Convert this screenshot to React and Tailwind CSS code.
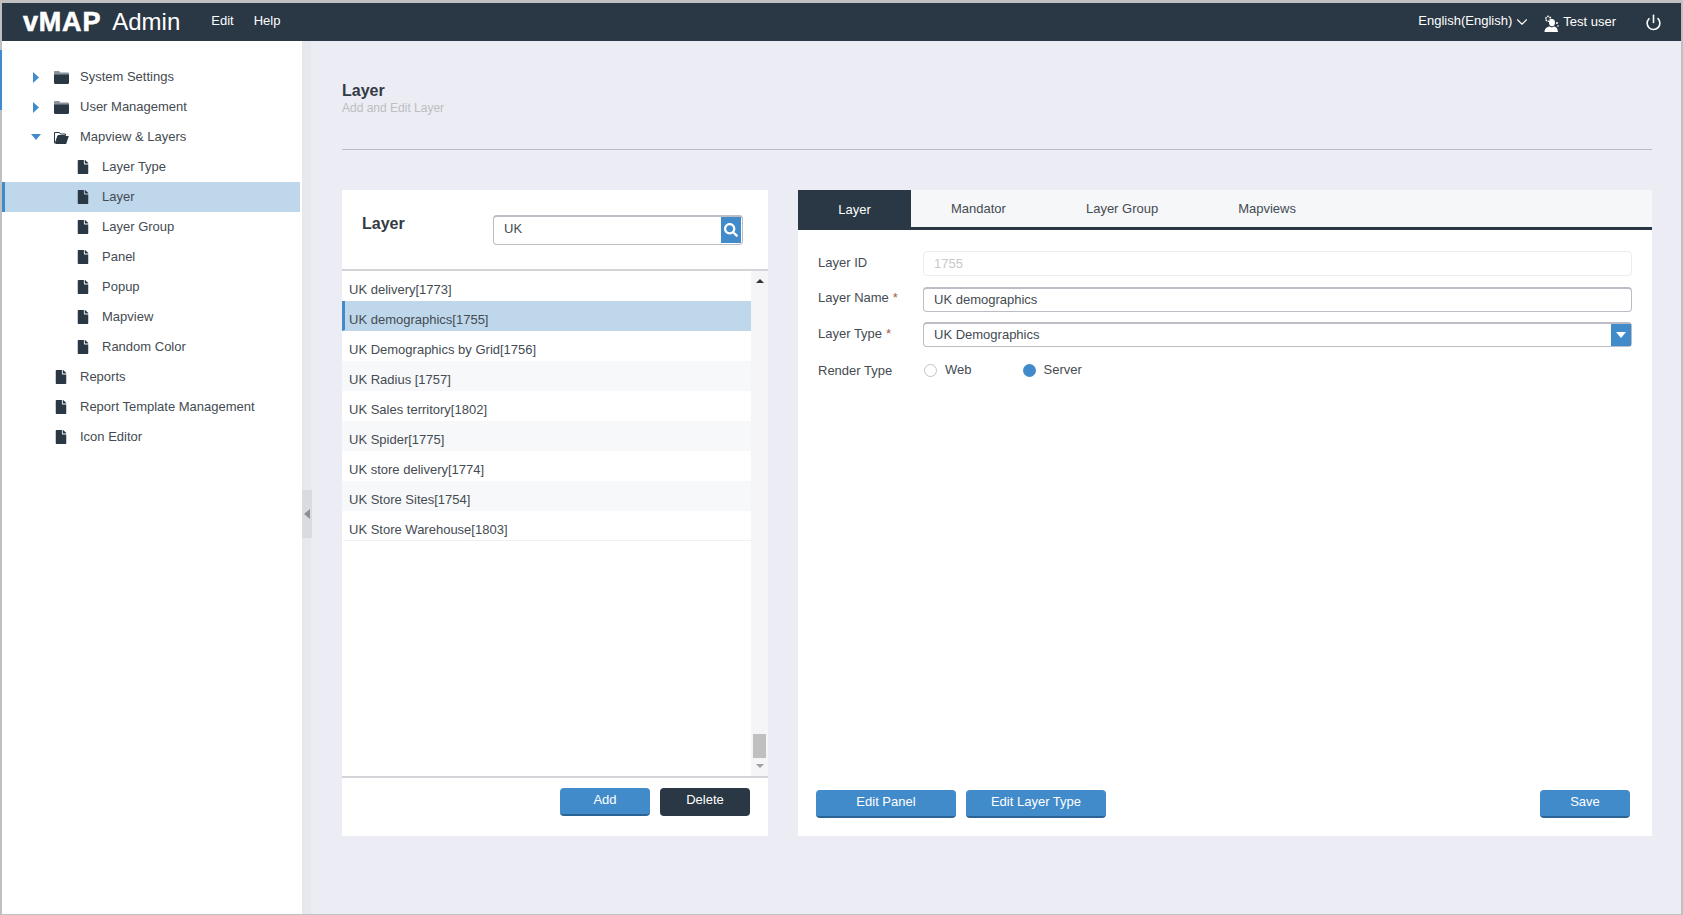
import { ChevronDown, Power } from "lucide-react";
import { FaFile, FaSearch } from "react-icons/fa";

const treeItems = [
	{ label: "System Settings", type: "closed" },
	{ label: "User Management", type: "closed" },
	{ label: "Mapview & Layers", type: "open" },
	{ label: "Layer Type", type: "child" },
	{ label: "Layer", type: "child", active: true },
	{ label: "Layer Group", type: "child" },
	{ label: "Panel", type: "child" },
	{ label: "Popup", type: "child" },
	{ label: "Mapview", type: "child" },
	{ label: "Random Color", type: "child" },
	{ label: "Reports", type: "file" },
	{ label: "Report Template Management", type: "file" },
	{ label: "Icon Editor", type: "file" },
];

const layers = [
	"UK delivery[1773]",
	"UK demographics[1755]",
	"UK Demographics by Grid[1756]",
	"UK Radius [1757]",
	"UK Sales territory[1802]",
	"UK Spider[1775]",
	"UK store delivery[1774]",
	"UK Store Sites[1754]",
	"UK Store Warehouse[1803]",
];

const FolderIcon = ({ open }) =>
	open ? (
		<svg width="15" height="13" viewBox="0 0 15 13" className="shrink-0">
			<path d="M0.5 1.5h5l1 1.5h5v1.5H4L1.5 11.5 0.5 12z" fill="none" stroke="#2a3744" strokeWidth="1" />
			<path d="M3.8 5h11l-2.6 8H1.2z" fill="#2a3744" />
		</svg>
	) : (
		<svg width="15" height="13" viewBox="0 0 15 13" className="shrink-0">
			<path d="M0 1.2C0 .5.5 0 1.2 0h4l1 1.5h7.6c.7 0 1.2.5 1.2 1.2V3H0z" fill="#8a929b" />
			<path d="M0 3.2h15v8.6c0 .7-.5 1.2-1.2 1.2H1.2C.5 13 0 12.5 0 11.8z" fill="#2a3744" />
		</svg>
	);

const UserGearIcon = () => (
	<svg width="15" height="17" viewBox="0 0 15 17" className="ml-[13px] mt-[2px] shrink-0">
		<circle cx="4.2" cy="3.8" r="2.4" fill="none" stroke="#fff" strokeWidth="1.6" strokeDasharray="1.5 0.8" />
		<ellipse cx="8" cy="7.6" rx="3" ry="3.6" fill="#fff" />
		<path d="M0.5 17c0-3.6 2.6-5.2 5-5.6l2.3 1.2 2.3-1.2c2 .4 3.6 1.6 3.9 5.6z" fill="#fff" />
		<circle cx="13" cy="8" r="1" fill="#fff" />
		<circle cx="14" cy="11" r="0.8" fill="#fff" />
	</svg>
);

const TreeRow = ({ item }) => {
	const isChild = item.type === "child";
	return (
		<div
			className={`flex h-[30px] items-center border-l-[3px] ${
				item.active ? "mr-[2px] border-[#428bca] bg-[#bfd7eb]" : "border-transparent"
			}`}
		>
			{item.type === "closed" && (
				<svg width="6" height="11" viewBox="0 0 6 11" className="ml-[28px] mr-[15px] shrink-0">
					<path d="M0 0l6 5.5L0 11z" fill="#428bca" />
				</svg>
			)}
			{item.type === "open" && (
				<svg width="10" height="6" viewBox="0 0 10 6" className="ml-[26px] mr-[13px] shrink-0">
					<path d="M0 0h10L5 6z" fill="#428bca" />
				</svg>
			)}
			{(item.type === "closed" || item.type === "open") && <FolderIcon open={item.type === "open"} />}
			{item.type === "file" && <FaFile className="ml-[49px] shrink-0 text-[14px] text-[#2a3744]" />}
			{isChild && <FaFile className="ml-[71px] shrink-0 text-[14px] text-[#2a3744]" />}
			<span className={`-mt-px text-[13px] text-[#444b52] ${item.type === "closed" || item.type === "open" ? "ml-[11px]" : "ml-3"}`}>
				{item.label}
			</span>
		</div>
	);
};

const Field = ({ label, star, disabled, select, value }) => (
	<div className="flex items-center">
		<div className="-mt-[2px] w-[105px] shrink-0 text-[13px] text-[#444b52]">
			{label}
			{star && <span className="ml-1 text-[#a85a4a]">*</span>}
		</div>
		<div
			className={`relative flex h-[25px] flex-1 items-center rounded-sm pl-[10px] text-[13px] ${
				disabled
					? "border border-[#ececf0] text-[#c8c8c8]"
					: "border border-t-2 border-[#bcbcc4] text-[#444b52]"
			}`}
		>
			{value}
			{select && (
				<div className="absolute bottom-0 right-0 top-0 flex w-5 items-center justify-center bg-[#428bca]">
					<svg width="10" height="6" viewBox="0 0 10 6">
						<path d="M0 0h10L5 6z" fill="#fff" />
					</svg>
				</div>
			)}
		</div>
	</div>
);

const BlueButton = ({ children, className = "" }) => (
	<button className={`h-7 rounded-sm border-b-2 border-[#2a6496] bg-[#428bca] text-[13px] text-white ${className}`}>
		{children}
	</button>
);

export default function App() {
	return (
		<div
			className="relative flex h-[915px] w-[1683px] flex-col border-b border-l-2 border-r-2 border-t-[3px] border-[#c0c0c0] bg-[#ebecf4]"
			style={{ fontFamily: '"Liberation Sans", Arial, sans-serif' }}
		>
			<header className="flex h-[38px] shrink-0 items-center bg-[#2a3744] text-[13px] text-white">
				<div className="ml-[21px] text-[27px] font-bold leading-none tracking-[0.8px] [-webkit-text-stroke:0.6px_white]">vMAP</div>
				<div className="ml-[11px] text-[24px] leading-none">Admin</div>
				<div className="ml-[31px] -mt-[2px]">Edit</div>
				<div className="ml-5 -mt-[2px]">Help</div>
				<div className="ml-auto -mt-[2px]">English(English)</div>
				<ChevronDown size={18} strokeWidth={1.5} className="ml-px" />
				<UserGearIcon />
				<div className="ml-1">Test user</div>
				<Power size={17} strokeWidth={2.25} className="ml-[29px] mr-[19px]" />
			</header>

			<div className="flex min-h-0 flex-1">
				<aside className="relative w-[300px] shrink-0 bg-white pt-[21px]">
					<div className="absolute -left-[2px] top-[9px] h-[60px] w-[2px] bg-[#428bca]" />
					{treeItems.map((item) => (
						<TreeRow key={item.label} item={item} />
					))}
				</aside>

				<main className="relative min-w-0 flex-1 pl-10 pr-[29px]">
					<div className="absolute bottom-0 left-0 top-0 w-[9px] bg-[#e6e8ee]" />
					<div className="absolute left-0 top-[449px] flex h-12 w-[10px] items-center justify-center bg-[#d9dbe0]">
						<svg width="6" height="10" viewBox="0 0 6 10">
							<path d="M6 0v10L0 5z" fill="#8a9096" />
						</svg>
					</div>

					<div className="pt-[40px]">
						<h1 className="text-base font-bold leading-[20px] text-[#333b44]">Layer</h1>
						<p className="text-xs leading-[15px] text-[#bdbdc2]">Add and Edit Layer</p>
					</div>
					<div className="mt-[33px] border-t border-[#bcbdc4]" />

					<div className="mt-10 flex h-[646px] gap-[30px]">
						<section className="flex w-[426px] shrink-0 flex-col bg-white">
							<div className="flex h-[81px] shrink-0 items-start justify-between border-b-2 border-[#d4d4d8] pl-5 pr-[25px] pt-[23px]">
								<h2 className="text-base font-bold leading-[22px] text-[#333b44]">Layer</h2>
								<div className="relative mt-[2px] flex h-[30px] w-[250px] items-center rounded-sm border border-t-2 border-[#bcbcc4] pb-[3px] pl-[10px] text-[13px] text-[#444b52]">
									UK
									<div className="absolute bottom-px right-px top-0 flex w-5 items-center justify-center bg-[#428bca]">
										<FaSearch className="text-[14px] text-white" />
									</div>
								</div>
							</div>

							<div className="flex min-h-0 flex-1">
								<div className="flex-1">
									{layers.map((name, i) => (
										<div
											key={name}
											className={`flex h-[30px] items-center border-b border-l-[3px] border-b-transparent pl-1 pt-[8px] text-[13px] text-[#444b52] last:border-b-[#f0f0f3] ${
												i === 1
													? "border-l-[#428bca] bg-[#bfd7eb]"
													: i % 2 === 1
														? "border-l-[#f7f8fa] bg-[#f7f8fa]"
														: "border-l-white bg-white"
											}`}
										>
											{name}
										</div>
									))}
								</div>
								<div className="flex w-[17px] shrink-0 flex-col items-center bg-[#f5f5f7] pt-2">
									<svg width="8" height="4" viewBox="0 0 8 4">
										<path d="M0 4h8L4 0z" fill="#333" />
									</svg>
									<div className="mt-auto h-6 w-[13px] bg-[#c0c0c0]" />
									<svg width="8" height="4" viewBox="0 0 8 4" className="mb-2 mt-[6px]">
										<path d="M0 0h8L4 4z" fill="#a0a0a0" />
									</svg>
								</div>
							</div>

							<div className="flex h-[60px] shrink-0 justify-end gap-[10px] border-t-2 border-[#d4d4d8] pr-[18px] pt-[10px]">
								<BlueButton className="w-[90px] pb-[3px]">Add</BlueButton>
								<button className="h-7 w-[90px] rounded-sm bg-[#2a3744] pb-1 text-[13px] text-white">Delete</button>
							</div>
						</section>

						<section className="flex min-w-0 flex-1 flex-col bg-white">
							<div className="flex h-10 shrink-0 border-b-[3px] border-[#2a3744] bg-[#f6f7f9] text-[13px] text-[#444b52]">
								<div className="flex w-[113px] items-center justify-center bg-[#2a3744] pt-[2px] text-white">Layer</div>
								<div className="flex items-center pl-10 pr-10">Mandator</div>
								<div className="flex items-center px-10">Layer Group</div>
								<div className="flex items-center px-10">Mapviews</div>
							</div>

							<div className="flex flex-col gap-[10.5px] px-5 pt-[21px]">
								<Field label="Layer ID" disabled value="1755" />
								<Field label="Layer Name" star value="UK demographics" />
								<Field label="Layer Type" star select value="UK Demographics" />
								<div className="flex h-[26px] items-center text-[13px] text-[#444b52]">
									<div className="w-[105px] shrink-0">Render Type</div>
									<span className="ml-px h-[13px] w-[13px] rounded-full border border-[#c4c4c4]" />
									<span className="ml-[8px] -mt-[1px]">Web</span>
									<span className="ml-[51px] h-[13px] w-[13px] rounded-full bg-[#428bca]" />
									<span className="ml-[8px] -mt-[1px]">Server</span>
								</div>
							</div>

							<div className="mt-auto flex gap-[10px] pb-[18px] pl-[18px] pr-[22px]">
								<BlueButton className="w-[140px] pb-[2px]">Edit Panel</BlueButton>
								<BlueButton className="w-[140px] pb-[2px]">Edit Layer Type</BlueButton>
								<BlueButton className="ml-auto w-[90px] pb-[2px]">Save</BlueButton>
							</div>
						</section>
					</div>
				</main>
			</div>
		</div>
	);
}
